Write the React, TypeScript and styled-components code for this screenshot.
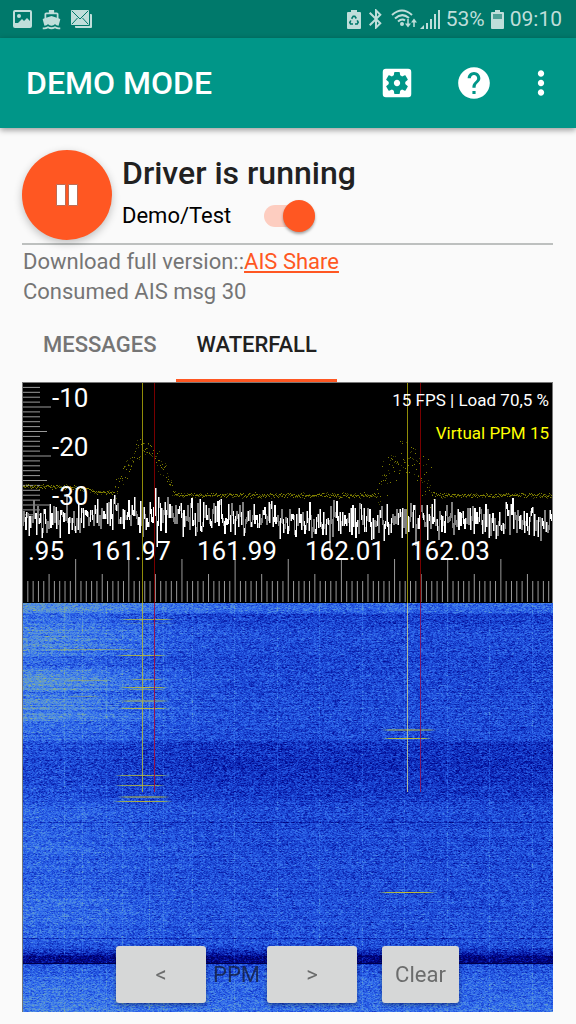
import React, { useLayoutEffect, useMemo, useRef, useState } from "react";
import styled, { createGlobalStyle } from "styled-components";
import {
  MdBluetooth,
  MdDirectionsBoat,
  MdHelp,
  MdMoreVert,
  MdSettingsApplications,
} from "react-icons/md";

const color = {
  primary: "#009688",
  primaryDark: "#00796b",
  accent: "#ff5722",
  page: "#fafafa",
  text: "#212121",
  muted: "#757575",
  status: "#bfdeda",
};

const GlobalStyle = createGlobalStyle`
  * { box-sizing: border-box; }
  body {
    margin: 0;
    background: ${color.page};
    color: ${color.text};
    font-family: Roboto, "Liberation Sans", sans-serif;
    font-size: 22px;
  }
  button { font: inherit; border: 0; padding: 0; cursor: pointer; }
`;

const Page = styled.div`
  min-height: 100vh;
  display: flex;
  flex-direction: column;
`;

const StatusBar = styled.div`
  height: 38px;
  padding: 0 14px 0 13px;
  display: flex;
  align-items: center;
  justify-content: space-between;
  background: ${color.primaryDark};
  color: ${color.status};
  font-size: 21px;
  line-height: 40px;
`;

const StatusGroup = styled.div<{ $gap: number }>`
  display: flex;
  align-items: center;
  gap: ${(p) => p.$gap}px;
  svg { display: block; flex: none; }
`;

const AppBar = styled.header`
  height: 90px;
  padding: 0 7px 0 26px;
  display: flex;
  align-items: center;
  justify-content: space-between;
  background: ${color.primary};
  color: #fff;
  box-shadow: 0 2px 6px rgba(0, 0, 0, 0.4);
  z-index: 1;
`;

const AppTitle = styled.h1`
  margin: 0;
  font-size: 32px;
  font-weight: 500;
  line-height: 90px;
`;

const Actions = styled.div`
  display: flex;
`;

const IconButton = styled.button<{ $width: number }>`
  width: ${(p) => p.$width}px;
  height: 76px;
  display: flex;
  align-items: center;
  justify-content: center;
  background: none;
  color: #fff;
  svg { width: 38px; height: 38px; }
`;

const Content = styled.main`
  padding: 22px 23px 12px 22px;
  display: flex;
  flex-direction: column;
`;

const DriverCard = styled.section`
  display: flex;
  gap: 10px;
  padding-bottom: 3px;
  border-bottom: 2px solid #bdc0bf;
`;

const RoundButton = styled.button`
  width: 90px;
  height: 90px;
  flex: none;
  display: flex;
  align-items: center;
  justify-content: center;
  border-radius: 50%;
  background: ${color.accent};
  box-shadow: 0 3px 8px rgba(0, 0, 0, 0.24);
`;

const DriverInfo = styled.div`
  display: flex;
  flex-direction: column;
`;

const DriverTitle = styled.h2`
  margin: 0;
  font-size: 32px;
  font-weight: 500;
  line-height: 46px;
`;

const SwitchRow = styled.label`
  display: flex;
  align-items: center;
  gap: 33px;
  line-height: 40px;
  color: #000;
`;

const Switch = styled.input`
  appearance: none;
  width: 51px;
  height: 22px;
  margin: 0;
  display: flex;
  align-items: center;
  background: #fdcdc0;
  border-radius: 11px;
  &::before {
    content: "";
    flex: none;
    width: 32px;
    height: 32px;
    border-radius: 50%;
    background: #ececec;
    box-shadow: 0 2px 3px rgba(0, 0, 0, 0.35);
  }
  &:checked::before {
    margin-left: auto;
    background: ${color.accent};
  }
`;

const Info = styled.section`
  padding: 2px 0 0 1px;
  color: ${color.muted};
  line-height: 30px;
  p { margin: 0; }
  a { color: ${color.accent}; }
`;

const Tabs = styled.div`
  display: flex;
  padding-left: 1px;
`;

const Tab = styled.button<{ $active: boolean }>`
  height: 75px;
  padding: 3px 20px 0;
  border-bottom: 3px solid ${(p) => (p.$active ? color.accent : "transparent")};
  background: none;
  color: ${(p) => (p.$active ? color.text : color.muted)};
  font-weight: 500;
`;

const Panel = styled.section`
  position: relative;
  background: #000;
  svg, canvas { display: block; width: 100%; height: auto; }
`;

const PanelControls = styled.div`
  position: absolute;
  left: 0;
  right: 0;
  bottom: 9px;
  display: flex;
  justify-content: center;
  align-items: center;
`;

const PpmLabel = styled.span`
  width: 61px;
  text-align: center;
  color: rgba(20, 24, 40, 0.72);
`;

const PanelButton = styled.button<{ $width: number; $gap?: number }>`
  width: ${(p) => p.$width}px;
  height: 57px;
  margin-left: ${(p) => p.$gap ?? 0}px;
  border-radius: 3px;
  background: #d6d7d7;
  color: #6b6c6c;
  box-shadow: 0 2px 4px rgba(0, 0, 0, 0.35);
`;

/* Repeatable pseudo random numbers, so the demo signal is stable. */
function createRandom(seed: number) {
  let s = seed;
  return () => {
    s = (s + 0x6d2b79f5) | 0;
    let t = Math.imul(s ^ (s >>> 15), 1 | s);
    t = (t + Math.imul(t ^ (t >>> 7), 61 | t)) ^ t;
    return ((t ^ (t >>> 14)) >>> 0) / 4294967296;
  };
}

type Point = [number, number];

function interpolate(points: Point[], x: number) {
  for (let i = 1; i < points.length; i++) {
    const [x0, y0] = points[i - 1];
    const [x1, y1] = points[i];
    if (x <= x1) return y0 + ((y1 - y0) * (x - x0)) / (x1 - x0);
  }
  return points[points.length - 1][1];
}

const WIDTH = 531;
const SPECTRUM_HEIGHT = 221;
const WATERFALL_HEIGHT = 409;

const PEAK_CURVE: Point[] = [
  [0, 104], [55, 105], [75, 110], [92, 110], [98, 96], [108, 80], [119, 63],
  [132, 72], [142, 87], [151, 110], [156, 113], [354, 113], [362, 98],
  [372, 84], [385, 73], [398, 86], [410, 107], [414, 113], [531, 113],
];

const CHANNELS = [
  { yellow: 120, red: 132 },
  { yellow: 385, red: 398 },
];

function buildTraces() {
  const rnd = createRandom(11);
  let bright = "";
  let dim = "";
  let last = 140;
  for (let x = 0; x < WIDTH; x++) {
    const center = x > 60 && x < 250 ? 134 : 138;
    const spread = rnd() < 0.06 ? 46 : 26;
    const y = Math.round(center + (rnd() + rnd() - 1) * spread * 0.75);
    const top = Math.min(last, y) - 2;
    const bottom = Math.max(last, y) + 3;
    const segment = `M${x + 0.5} ${top}V${bottom}`;
    if (rnd() < 0.45) bright += segment;
    else dim += segment;
    last = y;
  }
  let dots = "";
  let faint = "";
  for (let x = 0; x < WIDTH; x++) {
    const y = interpolate(PEAK_CURVE, x);
    const inPeak = (x > 92 && x < 151) || (x > 354 && x < 412);
    const spread = inPeak ? (x > 300 ? 24 : 14) : 3;
    for (let n = 0; n < 2; n++) {
      const py = Math.round(y + (rnd() + rnd() - 1) * spread) + 0.5;
      if (n === 0) dots += `M${x} ${py}h1`;
      else faint += `M${x} ${py}h1`;
    }
  }
  return { bright, dim, dots, faint };
}

function Spectrum() {
  const traces = useMemo(buildTraces, []);
  const levels = Array.from({ length: 28 }, (_, i) => i);
  const ticks = Array.from({ length: 100 }, (_, i) => i);
  return (
    <svg viewBox={`0 0 ${WIDTH} ${SPECTRUM_HEIGHT}`} role="img" aria-label="Spectrum">
      <rect width={WIDTH} height={SPECTRUM_HEIGHT} />
      <g fill="#9a9a9a">
        {levels.map((i) => (
          <rect key={i} x="0" y={i * 4.9} height="1" width={i % 10 === 5 ? 29 : i % 5 === 0 ? 25 : 18} />
        ))}
        {ticks.map((i) => {
          const height = i % 10 === 0 ? 43 : i % 5 === 0 ? 28 : 21;
          return <rect key={i} x={i * 5.315} y={220 - height} width="1" height={height} />;
        })}
      </g>
      <path d={traces.faint} stroke="#454500" />
      <path d={traces.dots} stroke="#808000" />
      <path d={traces.dim} stroke="#808080" />
      <path d={traces.bright} stroke="#fff" />
      <g fill="#fff" fontSize="26">
        <text x="30" y="25">-10</text>
        <text x="30" y="74">-20</text>
        <text x="30" y="123">-30</text>
        <text x="6" y="178">.95</text>
        <text x="69" y="178">161.97</text>
        <text x="175" y="178">161.99</text>
        <text x="283" y="178">162.01</text>
        <text x="388" y="178">162.03</text>
      </g>
      {CHANNELS.map((c) => (
        <g key={c.yellow}>
          <rect x={c.yellow} width="1" height={SPECTRUM_HEIGHT} fill="#908c08" />
          <rect x={c.red} width="1" height={SPECTRUM_HEIGHT} fill="#780000" />
        </g>
      ))}
      <g fontSize="17" textAnchor="end">
        <text x="527" y="24" fill="#fff">15 FPS | Load 70,5 %</text>
        <text x="527" y="57" fill="#ff0">Virtual PPM 15</text>
      </g>
      <path d={`M0 .5H${WIDTH}M.5 0V${SPECTRUM_HEIGHT}M${WIDTH - 0.5} 0V${SPECTRUM_HEIGHT}`} stroke="#777" />
    </svg>
  );
}

/* Signal strength (0..1) of each waterfall row. */
const ROW_LEVEL: Point[] = [
  [0, 0.55], [9, 0.55], [11, 0.36], [20, 0.36], [24, 0.43], [55, 0.41],
  [100, 0.42], [137, 0.42], [140, 0.31], [160, 0.31], [190, 0.34],
  [200, 0.4], [250, 0.42], [340, 0.44], [344, 0.38], [347, 0.3], [351, 0.24],
  [353, 0.1], [359, 0.08], [361, 0.42], [375, 0.52], [409, 0.57],
];

/* Extra strength of the strong station at the left edge. */
const LEFT_GLOW: Point[] = [
  [0, 0.18], [25, 0.26], [50, 0.3], [54, 0.16], [62, 0.14], [66, 0.34], [86, 0.32],
  [89, 0.16], [98, 0.28], [116, 0.28], [120, 0.18], [140, 0.13], [180, 0.1],
  [235, 0.12], [245, 0.17], [252, 0.1], [285, 0.09], [294, 0.15], [320, 0.12],
  [350, 0.03], [360, 0.04], [409, 0.08],
];

const PALETTE: [number, number, number, number][] = [
  [0, 0, 0, 100],
  [0.15, 2, 12, 150],
  [0.38, 24, 66, 208],
  [0.55, 46, 104, 236],
  [0.72, 80, 142, 226],
  [0.88, 112, 162, 180],
  [1, 150, 180, 115],
];

function paletteColor(value: number) {
  const v = Math.max(0, Math.min(1, value));
  let i = 1;
  while (i < PALETTE.length - 1 && v > PALETTE[i][0]) i++;
  const a = PALETTE[i - 1];
  const b = PALETTE[i];
  const t = (v - a[0]) / (b[0] - a[0]);
  return [1, 2, 3].map((k) => a[k] + (b[k] - a[k]) * t);
}

/* Received bursts: x, y, length, opacity, height. */
const BURSTS = [
  [97, 16, 56, 0.75, 1], [95, 20, 60, 0.2, 1], [93, 52, 53, 0.8, 1],
  [24, 46, 94, 0.45, 1], [107, 76, 35, 0.6, 1], [40, 77, 50, 0.45, 1],
  [96, 84, 51, 0.85, 1], [104, 86, 40, 0.45, 1], [97, 97, 51, 0.45, 2],
  [95, 105, 53, 0.85, 1], [92, 172, 56, 0.75, 1], [92, 182, 52, 0.75, 1],
  [95, 193, 54, 0.5, 2], [90, 198, 61, 0.85, 1], [359, 126, 56, 0.5, 2],
  [360, 135, 50, 0.95, 1], [356, 289, 59, 0.95, 1], [45, 93, 34, 0.4, 1],
];

const CARRIERS = [42, 60, 84, 100, 127, 141, 170, 212, 255, 297, 340, 382, 425, 467, 510];

function drawWaterfall(ctx: CanvasRenderingContext2D) {
  const rnd = createRandom(5);
  const image = ctx.createImageData(WIDTH, WATERFALL_HEIGHT);
  for (let y = 0; y < WATERFALL_HEIGHT; y++) {
    const dark = y === 219 || y === 335 ? -0.14 : 0;
    const row = interpolate(ROW_LEVEL, y) + (rnd() - 0.5) * 0.07 + dark;
    const glow = interpolate(LEFT_GLOW, y) * (0.7 + rnd() * 0.6);
    let previous = 0;
    for (let x = 0; x < WIDTH; x++) {
      const noise = (rnd() + rnd() - 1) * 0.24;
      const mixed = noise * 0.85 + previous * 0.35;
      previous = noise;
      let v = row + mixed + glow * Math.exp(-(x * x) / 17000);
      if (CARRIERS.includes(x) && rnd() < 0.75) v += 0.12;
      const [r, g, b] = paletteColor(v);
      const at = (y * WIDTH + x) * 4;
      image.data[at] = r;
      image.data[at + 1] = g;
      image.data[at + 2] = b;
      image.data[at + 3] = 255;
    }
  }
  ctx.putImageData(image, 0, 0);

  for (const [x, y, length, opacity, height] of BURSTS) {
    const fade = ctx.createLinearGradient(x, 0, x + length, 0);
    fade.addColorStop(0, "rgba(150,190,120,0)");
    fade.addColorStop(0.15, `rgba(165,185,75,${opacity})`);
    fade.addColorStop(0.5, `rgba(205,195,40,${opacity})`);
    fade.addColorStop(0.85, `rgba(165,185,75,${opacity})`);
    fade.addColorStop(1, "rgba(150,190,120,0)");
    ctx.fillStyle = fade;
    ctx.fillRect(x, y, length, height);
  }
  ctx.fillStyle = "#00004c";
  ctx.fillRect(0, 360, WIDTH, 1);
  CHANNELS.forEach((c, i) => {
    ctx.fillStyle = i === 0 ? "rgba(175,185,60,0.85)" : "rgba(195,205,150,0.85)";
    ctx.fillRect(c.yellow, 0, 1, 189);
    ctx.fillStyle = i === 0 ? "rgba(165,10,60,0.9)" : "rgba(140,20,90,0.85)";
    ctx.fillRect(c.red, 0, 1, 189);
  });
  ctx.fillStyle = "#74787c";
  ctx.fillRect(0, 0, 1, WATERFALL_HEIGHT);
}

function Waterfall() {
  const ref = useRef<HTMLCanvasElement>(null);
  useLayoutEffect(() => {
    const ctx = ref.current?.getContext("2d");
    if (ctx) drawWaterfall(ctx);
  }, []);
  return <canvas ref={ref} width={WIDTH} height={WATERFALL_HEIGHT} aria-label="Waterfall" />;
}

const PictureIcon = () => (
  <svg width="19" height="18" viewBox="0 0 19 18">
    <rect width="19" height="18" rx="2" fill="currentColor" />
    <path d="M2 2h15v9l-3-3-3 3-2-2-4 4-3 0z" fill={color.primaryDark} />
    <circle cx="6" cy="6" r="2" fill="currentColor" />
  </svg>
);

const MailIcon = () => (
  <svg width="21" height="18" viewBox="0 0 21 18" fill="currentColor">
    <path d="M19 4h1q1 0 1 1v12q0 1-1 1H5q-1 0-1-1v-1h14q1 0 1-1z" />
    <rect width="18" height="15" rx="1" />
    <path d="M1 1l8 8 8-8M1 14l5.500-6M17 14l-5.500-6" fill="none" stroke={color.primaryDark} />
  </svg>
);

const BatterySaverIcon = () => (
  <svg width="14" height="19" viewBox="0 0 14 19">
    <path d="M4 0h6v2h3q1 0 1 1v15q0 1-1 1H1q-1 0-1-1V3q0-1 1-1h3z" fill="currentColor" />
    <path
      d="M4.600 8.700L6.200 6.200h1.600l1.500 2.300M10.200 10.300l1 2-1 1.700H8M6 14H3.600l-.800-1.500 1-2"
      fill="none"
      stroke={color.primaryDark}
      strokeWidth="1.600"
    />
  </svg>
);

const WifiIcon = () => (
  <svg width="26" height="20" viewBox="0 0 26 20" fill="none" stroke="currentColor" strokeWidth="2">
    <path d="M1 6Q11-3 21 6M4 9.500Q11 3 18 9M7 12.500q4-3.500 7-1" />
    <circle cx="11" cy="15" r="2" fill="currentColor" stroke="none" />
    <path d="M17 10v7M23 18v-6" strokeWidth="1.500" />
    <path d="M14 14.500h6l-3 4zM20 13.500h6l-3-4z" fill="currentColor" stroke="none" />
  </svg>
);

const SignalIcon = () => (
  <svg width="20" height="20" viewBox="0 0 20 20" fill="currentColor">
    <path d="M0 20l4-4v4zM6 14h2v6H6zM10 10h2v10h-2zM14 5h2v15h-2zM18 1h2v19h-2z" />
  </svg>
);

const BatteryIcon = () => (
  <svg width="13" height="19" viewBox="0 0 13 19">
    <path d="M4 0h5v2h3q1 0 1 1v15q0 1-1 1H1q-1 0-1-1V3q0-1 1-1h3z" fill="currentColor" />
    <rect x="2" y="4" width="9" height="5" fill="#4ea196" />
  </svg>
);

const PauseIcon = () => (
  <svg width="22" height="22" viewBox="0 0 22 22">
    <path d="M.500 .500h9v21h-9zM12.500 .500h9v21h-9z" fill="#fff" stroke="#bd6c54" />
  </svg>
);

const TABS = ["MESSAGES", "WATERFALL"];

export default function App() {
  const [demo, setDemo] = useState(true);
  const [tab, setTab] = useState("WATERFALL");

  return (
    <>
      <GlobalStyle />
      <Page>
        <StatusBar>
          <StatusGroup $gap={9}>
            <PictureIcon />
            <MdDirectionsBoat size={21} />
            <MailIcon />
          </StatusGroup>
          <StatusGroup $gap={6}>
            <StatusGroup $gap={3}>
              <BatterySaverIcon />
              <MdBluetooth size={24} />
              <WifiIcon />
              <SignalIcon />
            </StatusGroup>
            <span>53%</span>
            <BatteryIcon />
            <span>09:10</span>
          </StatusGroup>
        </StatusBar>

        <AppBar>
          <AppTitle>DEMO MODE</AppTitle>
          <Actions>
            <IconButton $width={77} aria-label="Settings"><MdSettingsApplications /></IconButton>
            <IconButton $width={77} aria-label="Help"><MdHelp /></IconButton>
            <IconButton $width={57} aria-label="More options"><MdMoreVert /></IconButton>
          </Actions>
        </AppBar>

        <Content>
          <DriverCard>
            <RoundButton aria-label="Pause"><PauseIcon /></RoundButton>
            <DriverInfo>
              <DriverTitle>Driver is running</DriverTitle>
              <SwitchRow>
                Demo/Test
                <Switch type="checkbox" role="switch" checked={demo} onChange={(e) => setDemo(e.target.checked)} />
              </SwitchRow>
            </DriverInfo>
          </DriverCard>

          <Info>
            <p>Download full version::<a href="#ais-share">AIS Share</a></p>
            <p>Consumed AIS msg 30</p>
          </Info>

          <Tabs role="tablist">
            {TABS.map((name) => (
              <Tab key={name} role="tab" aria-selected={tab === name} $active={tab === name} onClick={() => setTab(name)}>
                {name}
              </Tab>
            ))}
          </Tabs>

          <Panel>
            <Spectrum />
            <Waterfall />
            <PanelControls>
              <PanelButton $width={90} aria-label="Decrease PPM">&lt;</PanelButton>
              <PpmLabel>PPM</PpmLabel>
              <PanelButton $width={90} aria-label="Increase PPM">&gt;</PanelButton>
              <PanelButton $width={77} $gap={25}>Clear</PanelButton>
            </PanelControls>
          </Panel>
        </Content>
      </Page>
    </>
  );
}
